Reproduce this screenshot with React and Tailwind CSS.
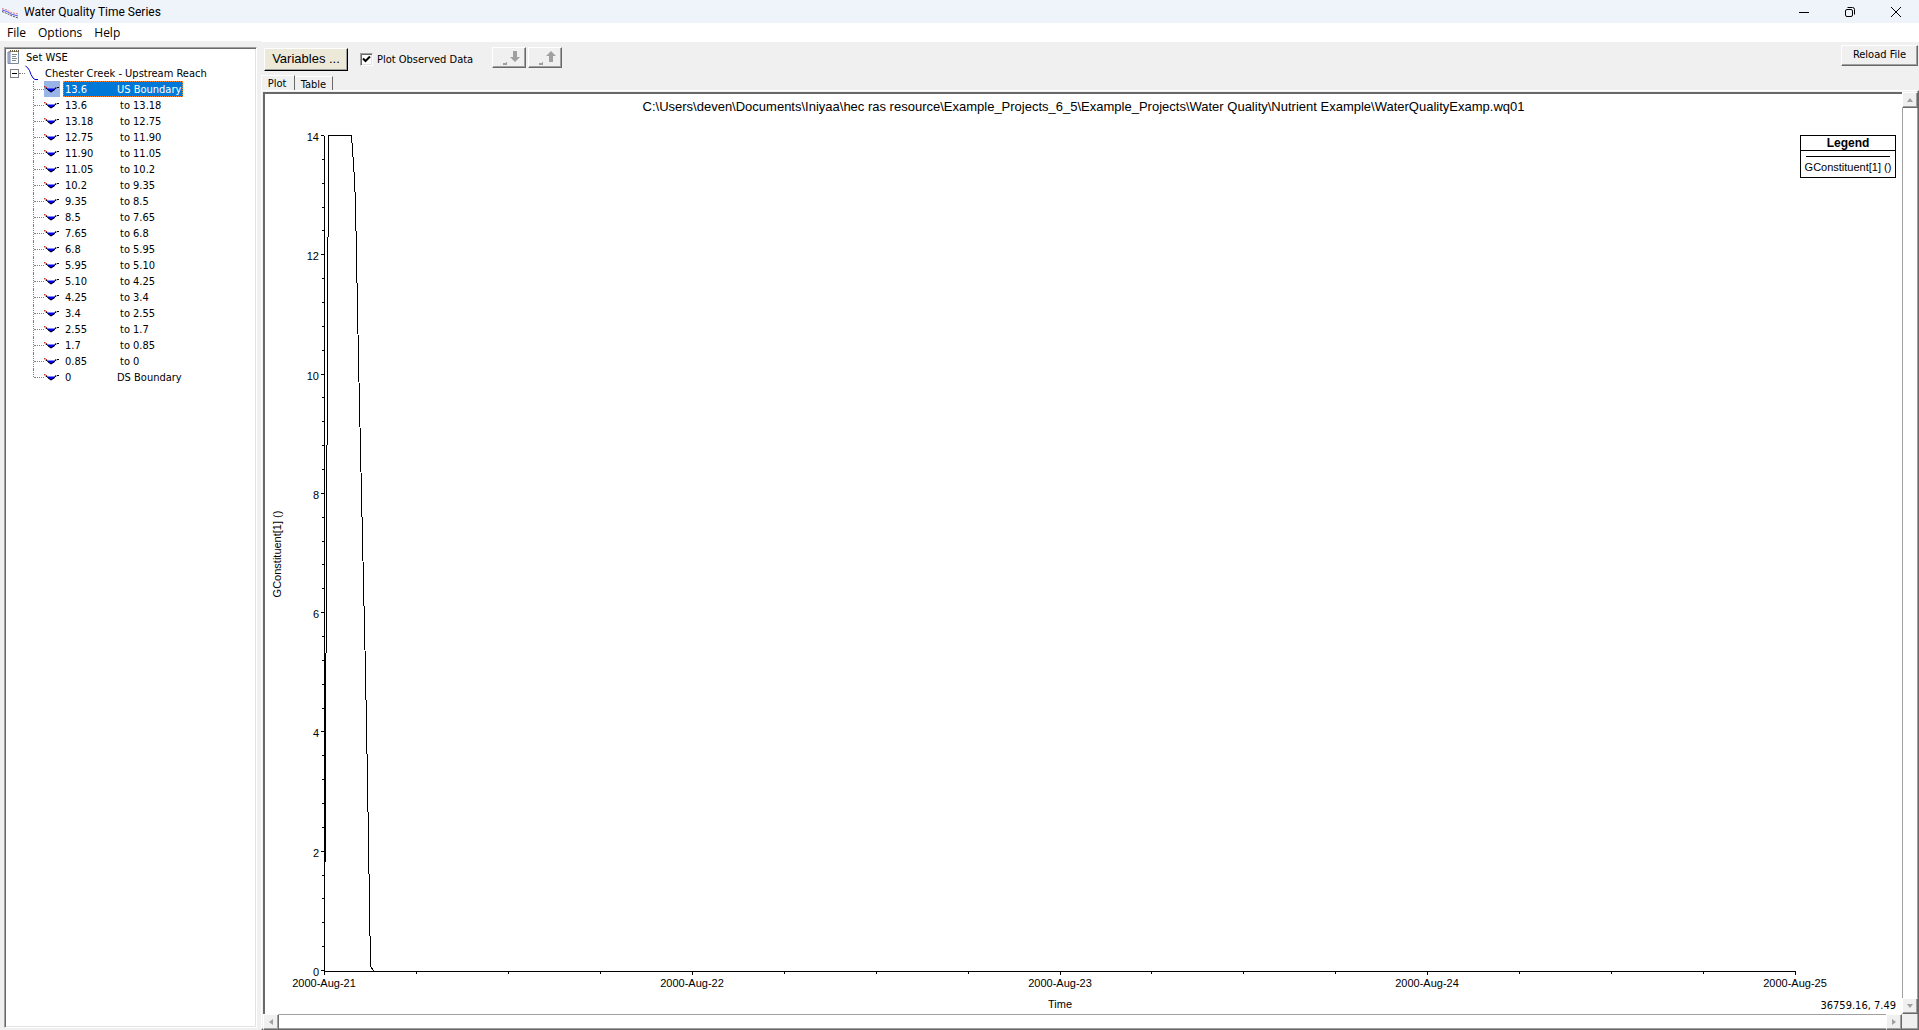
import { useState } from "react"

const stations = [
  ["13.6", "US Boundary"],
  ["13.6", "to 13.18"],
  ["13.18", "to 12.75"],
  ["12.75", "to 11.90"],
  ["11.90", "to 11.05"],
  ["11.05", "to 10.2"],
  ["10.2", "to 9.35"],
  ["9.35", "to 8.5"],
  ["8.5", "to 7.65"],
  ["7.65", "to 6.8"],
  ["6.8", "to 5.95"],
  ["5.95", "to 5.10"],
  ["5.10", "to 4.25"],
  ["4.25", "to 3.4"],
  ["3.4", "to 2.55"],
  ["2.55", "to 1.7"],
  ["1.7", "to 0.85"],
  ["0.85", "to 0"],
  ["0", "DS Boundary"],
]

const dates = ["2000-Aug-21", "2000-Aug-22", "2000-Aug-23", "2000-Aug-24", "2000-Aug-25"]

// plot frame inside the 1637 x 920 drawing
const plot = { left: 59, right: 1530, top: 42, bottom: 877, max: 14 }

const xAt = (day) => Math.round(plot.left + ((plot.right - plot.left) * day) / 4)
const yAt = (value) => Math.round(plot.bottom - ((plot.bottom - plot.top) * value) / plot.max)

const raised = "border border-t-white border-l-white border-r-[#696969] border-b-[#696969] bg-[#f0f0f0] shadow-[inset_-1px_-1px_0_#a0a0a0]"
const sunken = "border border-t-[#a0a0a0] border-l-[#a0a0a0] border-r-white border-b-white bg-white shadow-[inset_1px_1px_0_#696969,inset_-1px_-1px_0_#e3e3e3]"

function AppIcon() {
  return (
    <svg className="h-4 w-4 shrink-0" viewBox="0 0 16 16" fill="none">
      <path d="M0 4.500l5 1.500 4 2.500 7 1.500" stroke="#e88080" strokeDasharray="2 1" />
      <path d="M0 6l5 1.500 4 2.500 7 2" stroke="#5a5af0" />
      <path d="M0 7.500l5 2 4 2 7 2.500" stroke="#555" strokeDasharray="2 1" />
    </svg>
  )
}

function NotebookIcon() {
  return (
    <svg className="h-4 w-4 shrink-0" viewBox="0 0 16 16" fill="none">
      <path d="M2.500 2.500h9v12h-9z" fill="#fff" stroke="#7a8a99" />
      <path d="M1 3v11.500h2V3z" fill="#b4bedb" stroke="#7c88b0" />
      <path d="M3 2h9" stroke="#6e6240" strokeWidth="2" strokeDasharray="1 1" />
      <path d="M5 5.500h5M5 7.500h4M5 9.500h5M5 11.500h4" stroke="#7b8c8c" />
    </svg>
  )
}

function ReachIcon() {
  return (
    <svg className="h-4 w-4 shrink-0" viewBox="0 0 16 16" fill="none">
      <path d="M.5 1l2 1.500 2 3 1.500 4 2 3.500 2 1.500h3" stroke="#0000d8" />
    </svg>
  )
}

function SectionIcon() {
  return (
    <svg className="h-4 w-4" viewBox="0 0 16 16" fill="none">
      <path d="M3 7.500h8.500L10 10H9l-1 1H6.500L5 10z" fill="#0000ff" />
      <path d="M1 6.500l1 1h1l1.500 2h1l1 1.500h1l1-1.500h1l1.500-2h1l1-1h2" stroke="#000" />
      <path d="M0 5.500h1.500M2 6.500h1M11 6.500h1" stroke="#d02020" />
    </svg>
  )
}

function StationRow({ station, selected, onSelect }) {
  const [from, to] = station
  const boundary = to.endsWith("Boundary")

  return (
    <li className="group flex h-4 items-center pl-[27px]">
      <span className="h-4 w-0 self-start border-l border-dotted border-[#808080] group-last:h-2" />
      <span className="w-[10px] border-t border-dotted border-[#808080]" />
      <span className={selected ? "h-4 w-4 bg-[#99b4e6]" : "h-4 w-4"}>
        <SectionIcon />
      </span>
      <button
        type="button"
        onClick={onSelect}
        className={`ml-[3px] flex h-4 items-center border pt-0.5 pl-px pr-px ${
          selected ? "border-dotted border-[#ff8728] bg-[#0078d7] text-white" : "border-transparent"
        }`}
      >
        <span className={boundary ? "w-[52px] text-left" : "w-[55px] text-left"}>{from}</span>
        {to}
      </button>
    </li>
  )
}

function Tree() {
  const [open, setOpen] = useState(true)
  const [selected, setSelected] = useState(0)

  return (
    <nav className={`w-[253px] shrink-0 py-px pl-px ${sunken}`}>
      <button type="button" className="flex h-4 items-center gap-[3px] pl-px">
        <NotebookIcon />
        <span className="pt-0.5">Set WSE</span>
      </button>
      <div className="flex h-4 items-center pl-1">
        <button
          type="button"
          aria-label="toggle reach"
          onClick={() => setOpen((o) => !o)}
          className="flex h-[9px] w-[9px] items-center justify-center border border-[#808080]"
        >
          <span className="h-px w-[5px] bg-black" />
        </button>
        <span className="w-[6px] border-t border-dotted border-[#808080]" />
        <span>
          <ReachIcon />
        </span>
        <span className="ml-[4px] pt-0.5">Chester Creek - Upstream Reach</span>
      </div>
      {open && (
        <ul>
          {stations.map((station, i) => (
            <StationRow key={i} station={station} selected={i === selected} onSelect={() => setSelected(i)} />
          ))}
        </ul>
      )}
    </nav>
  )
}

function ArrowButton({ label, flip }) {
  return (
    <button type="button" aria-label={label} className={`flex h-[21px] w-[34px] items-center justify-end pr-1 ${raised}`}>
      <svg className="h-4 w-5" viewBox="0 0 20 16" fill="#a0a0a0">
        <path d="M2 13h4v2H2zM5 12h1v1H5z" />
        <path d={flip ? "M12 12V6H9l5-5 5 5h-3v6z" : "M12 1v6H9l5 5 5-5h-3V1z"} />
      </svg>
    </button>
  )
}

function ScrollButton({ label, d }) {
  return (
    <button type="button" aria-label={label} className={`flex h-4 w-4 shrink-0 items-center justify-center ${raised}`}>
      <svg className="h-2 w-2" viewBox="0 0 8 8" fill="#a0a0a0">
        <path d={d} />
      </svg>
    </button>
  )
}

function Chart() {
  const yMinor = Array.from({ length: 36 }, (_, i) => i * 0.4)
  const xMinor = Array.from({ length: 17 }, (_, i) => i / 4)
  const yMajor = [0, 2, 4, 6, 8, 10, 12, 14]

  return (
    <svg className="h-full w-full" viewBox="0 0 1637 920">
      <g stroke="#000" shapeRendering="crispEdges" fill="none">
        <path d={`M${plot.left + 0.5} ${plot.top}V${plot.bottom + 0.5}H${plot.right + 1}`} />
        {yMinor.map((v) => (
          <path key={v} d={`M${plot.left - 2} ${yAt(v) - 0.5}h2`} />
        ))}
        {yMajor.map((v) => (
          <path key={v} d={`M${plot.left - 3} ${yAt(v) - 0.5}h3`} />
        ))}
        {xMinor.map((d) => (
          <path key={d} d={`M${xAt(d) + 0.5} ${plot.bottom}v3`} />
        ))}
        {dates.map((date, i) => (
          <path key={date} d={`M${xAt(i) + 0.5} ${plot.bottom}v4`} />
        ))}
        <path d="M59.500 877L63.500 41.500H86.500L89.500 85L90.500 110L93.500 265L96.500 400L100.500 578L102.500 686L105.500 872L108.500 877" />
      </g>
      <g className="font-['Liberation_Sans',sans-serif] text-[11px]">
        {yMajor.map((v) => (
          <text key={v} x={plot.left - 5} y={yAt(v) + 5} textAnchor="end">
            {v}
          </text>
        ))}
        {dates.map((date, i) => (
          <text key={date} x={xAt(i)} y={893} textAnchor="middle">
            {date}
          </text>
        ))}
        <text x={xAt(2)} y={914} textAnchor="middle">
          Time
        </text>
        <text transform="translate(16 460) rotate(-90)" textAnchor="middle">
          GConstituent[1] ()
        </text>
      </g>
    </svg>
  )
}

function Legend() {
  return (
    <div className="absolute right-[6px] top-[41px] w-24 border border-black bg-white text-center font-['Liberation_Sans',sans-serif] text-[11px]">
      <div className="h-[15px] border-b border-black text-[12px] leading-[14px] font-bold">Legend</div>
      <div className="mx-[5px] mt-[5px] border-t border-black" />
      <div className="h-5 leading-5 whitespace-nowrap">GConstituent[1] ()</div>
    </div>
  )
}

function PlotPanel() {
  return (
    <div className="flex min-h-0 flex-1 flex-col border border-t-white border-l-white border-r-[#696969] border-b-[#696969] pt-px pl-px shadow-[inset_-1px_-1px_0_#a0a0a0]">
      <div className="flex min-h-0 flex-1">
        <div className="relative min-w-0 flex-1 border-t-2 border-l-2 border-t-[#696969] border-l-[#696969] bg-white">
          <Chart />
          <h1 className="absolute inset-x-0 top-[3px] text-center font-['Liberation_Sans',sans-serif] text-[13px] leading-5">
            {"C:\\Users\\deven\\Documents\\Iniyaa\\hec ras resource\\Example_Projects_6_5\\Example_Projects\\Water Quality\\Nutrient Example\\WaterQualityExamp.wq01"}
          </h1>
          <Legend />
          <output className="absolute right-[6px] bottom-0 leading-4">36759.16, 7.49</output>
        </div>
        <div className="flex w-4 shrink-0 flex-col justify-between border-x border-[#a0a0a0] bg-white">
          <div className="-mx-px">
            <ScrollButton label="scroll up" d="M1 6l3-4 3 4z" />
          </div>
          <div className="-mx-px">
            <ScrollButton label="scroll down" d="M1 2l3 4 3-4z" />
          </div>
        </div>
      </div>
      <div className="flex h-[15px] shrink-0 pr-4">
        <ScrollButton label="scroll left" d="M6 1L2 4l4 3z" />
        <div className="flex-1 border-y border-[#a0a0a0] bg-white" />
        <ScrollButton label="scroll right" d="M2 1l4 3-4 3z" />
      </div>
    </div>
  )
}

function TitleBar() {
  return (
    <header className="flex h-[23px] shrink-0 items-center bg-[#eff3fa] pl-[2px] font-[Roboto,'Open_Sans',sans-serif] text-[12px]">
      <AppIcon />
      <span className="ml-[6px] flex-1">Water Quality Time Series</span>
      <div className="flex h-full">
        <button type="button" aria-label="minimize" className="flex w-[46px] items-center justify-center">
          <svg className="h-3 w-3" viewBox="0 0 12 12" fill="none" stroke="#000">
            <path d="M1 6.500h10" />
          </svg>
        </button>
        <button type="button" aria-label="restore" className="flex w-[46px] items-center justify-center">
          <svg className="h-3 w-3" viewBox="0 0 12 12" fill="none" stroke="#000">
            <rect x="1.500" y="3.500" width="7" height="7" rx="1.500" />
            <path d="M3.500 1.500H8.500a2 2 0 0 1 2 2V8.500" />
          </svg>
        </button>
        <button type="button" aria-label="close" className="flex w-[46px] items-center justify-center">
          <svg className="h-3 w-3" viewBox="0 0 12 12" fill="none" stroke="#000">
            <path d="M1 1l10 10M11 1L1 11" />
          </svg>
        </button>
      </div>
    </header>
  )
}

function Toolbar() {
  const [observed, setObserved] = useState(true)

  return (
    <div className="flex h-[33px] shrink-0 items-start pl-[3px] pt-[5px]">
      <button
        type="button"
        className="mt-px h-[23px] w-[84px] border border-t-white border-l-white border-r-black border-b-black bg-[#ece9d8] pb-0.5 font-['Liberation_Sans',sans-serif] text-[13px] shadow-[inset_-1px_-1px_0_#a0a0a0]"
      >
        Variables ...
      </button>
      <label className="ml-3 mt-1 flex h-4 items-center gap-1">
        <span className="relative flex">
          <input
            type="checkbox"
            checked={observed}
            onChange={(e) => setObserved(e.target.checked)}
            className={`h-[13px] w-[13px] appearance-none ${sunken}`}
          />
          {observed && (
            <svg className="pointer-events-none absolute inset-0 h-[13px] w-[13px]" viewBox="0 0 13 13" fill="none">
              <path d="M3 5.500l2.500 2.500L10 3.500" stroke="#000" strokeWidth="2" />
            </svg>
          )}
        </span>
        <span className="pt-0.5">Plot Observed Data</span>
      </label>
      <div className="ml-[19px] flex gap-[2px]">
        <ArrowButton label="next" />
        <ArrowButton label="previous" flip />
      </div>
      <button type="button" className={`-mt-[2px] ml-auto mr-px h-[21px] w-[77px] ${raised}`}>
        Reload File
      </button>
    </div>
  )
}

function Tabs() {
  const [tab, setTab] = useState("plot")

  return (
    <div role="tablist" className="flex h-[15px] shrink-0 items-end">
      <button
        type="button"
        role="tab"
        aria-selected={tab === "plot"}
        onClick={() => setTab("plot")}
        className="h-full w-[34px] border border-b-0 border-t-white border-l-white border-r-[#696969] pr-0.5 leading-4"
      >
        Plot
      </button>
      <button
        type="button"
        role="tab"
        aria-selected={tab === "table"}
        onClick={() => setTab("table")}
        className="h-[14px] w-[38px] border-t border-r border-t-white border-r-[#696969] leading-4"
      >
        Table
      </button>
    </div>
  )
}

function App() {
  return (
    <div className="flex h-screen flex-col bg-[#f0f0f0] font-['DejaVu_Sans_Condensed','Open_Sans','Noto_Sans',sans-serif] text-[11px] text-black">
      <TitleBar />
      <nav className="flex h-[18px] shrink-0 items-center gap-3 bg-white pt-0.5 pl-[7px] font-['Open_Sans','Noto_Sans',sans-serif] text-[12px]">
        <button type="button">File</button>
        <button type="button">Options</button>
        <button type="button">Help</button>
      </nav>
      <div className="flex min-h-0 flex-1">
        <div className="flex pt-[6px] pb-[2px] pl-1">
          <Tree />
        </div>
        <main className="ml-1 flex min-w-0 flex-1 flex-col border-t border-white">
          <Toolbar />
          <Tabs />
          <PlotPanel />
        </main>
      </div>
    </div>
  )
}

export default App
